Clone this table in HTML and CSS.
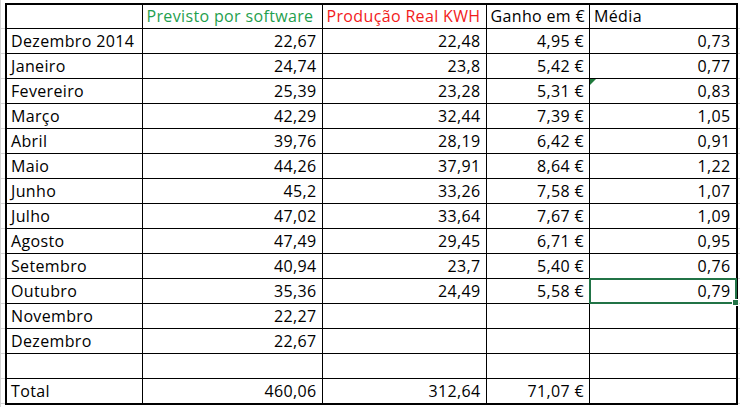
FILE: index.html
```html
<!DOCTYPE html>
<html lang="pt">
<head>
<meta charset="utf-8">
<title>Produção solar</title>
<link rel="stylesheet" href="styles.css">
</head>
<body>
<table class="sheet">
  <colgroup>
    <col class="c1"><col class="c2"><col class="c3"><col class="c4"><col class="c5">
  </colgroup>
  <tr class="head">
    <td></td>
    <td class="green">Previsto por software</td>
    <td class="red">Produção Real KWH</td>
    <td>Ganho em €</td>
    <td>Média</td>
  </tr>
  <tr><td>Dezembro 2014</td><td class="num">22,67</td><td class="num">22,48</td><td class="num">4,95 €</td><td class="num">0,73</td></tr>
  <tr><td>Janeiro</td><td class="num">24,74</td><td class="num">23,8</td><td class="num">5,42 €</td><td class="num">0,77</td></tr>
  <tr><td>Fevereiro</td><td class="num">25,39</td><td class="num">23,28</td><td class="num">5,31 €</td><td class="num err">0,83</td></tr>
  <tr><td>Março</td><td class="num">42,29</td><td class="num">32,44</td><td class="num">7,39 €</td><td class="num">1,05</td></tr>
  <tr><td>Abril</td><td class="num">39,76</td><td class="num">28,19</td><td class="num">6,42 €</td><td class="num">0,91</td></tr>
  <tr><td>Maio</td><td class="num">44,26</td><td class="num">37,91</td><td class="num">8,64 €</td><td class="num">1,22</td></tr>
  <tr><td>Junho</td><td class="num">45,2</td><td class="num">33,26</td><td class="num">7,58 €</td><td class="num">1,07</td></tr>
  <tr><td>Julho</td><td class="num">47,02</td><td class="num">33,64</td><td class="num">7,67 €</td><td class="num">1,09</td></tr>
  <tr><td>Agosto</td><td class="num">47,49</td><td class="num">29,45</td><td class="num">6,71 €</td><td class="num">0,95</td></tr>
  <tr><td>Setembro</td><td class="num">40,94</td><td class="num">23,7</td><td class="num">5,40 €</td><td class="num">0,76</td></tr>
  <tr><td>Outubro</td><td class="num">35,36</td><td class="num">24,49</td><td class="num">5,58 €</td><td class="num sel">0,79</td></tr>
  <tr><td>Novembro</td><td class="num">22,27</td><td></td><td></td><td></td></tr>
  <tr><td>Dezembro</td><td class="num">22,67</td><td></td><td></td><td></td></tr>
  <tr><td></td><td></td><td></td><td></td><td></td></tr>
  <tr class="total"><td>Total</td><td class="num">460,06</td><td class="num">312,64</td><td class="num">71,07 €</td><td></td></tr>
</table>
</body>
</html>
```

FILE: styles.css
```css
html, body {
  margin: 0;
  padding: 0;
}
body {
  width: 740px;
  height: 407px;
  background-color: #fff;
  background-image:
    repeating-linear-gradient(to bottom, transparent 0 24px, #d4d4d4 24px 25px),
    linear-gradient(to right, #d4d4d4 0 1px, transparent 1px);
  background-position: 0 4px, 0 0;
  background-repeat: repeat, no-repeat;
  font-family: "Open Sans", Lato, sans-serif;
  font-size: 16px;
  letter-spacing: 0.35px;
  color: #000;
  padding: 3px 0 0 5px;
  box-sizing: border-box;
  overflow: hidden;
}
.sheet {
  border-collapse: collapse;
  table-layout: fixed;
  border: 2px solid #000;
  background: #fff;
}
.c1 { width: 136px; }
.c2 { width: 180px; }
.c3 { width: 164px; }
.c4 { width: 103px; }
.c5 { width: 147px; }
.sheet td {
  border: 1px solid #000;
  height: 22px;
  padding: 0 4px 2px 4px;
  vertical-align: bottom;
  line-height: 20px;
  white-space: nowrap;
  overflow: visible;
}
.sheet .head td {
  height: 21px;
}
.sheet td.num {
  text-align: right;
  padding-right: 5px;
}
.green { color: #1fa04e; }
.red { color: #f21b1b; }
.sheet td.err, .sheet td.sel {
  position: relative;
}
.err::before {
  content: "";
  position: absolute;
  left: 0;
  top: 0;
  border-top: 6px solid #1f7a3c;
  border-right: 6px solid transparent;
}
.sel::after {
  content: "";
  position: absolute;
  left: -1px;
  top: -1px;
  right: -1px;
  bottom: -1px;
  border: 2px solid #217346;
}
.sel::before {
  content: "";
  position: absolute;
  right: -3px;
  bottom: -3px;
  width: 5px;
  height: 5px;
  background: #217346;
  border: 1px solid #fff;
  z-index: 1;
}
```
